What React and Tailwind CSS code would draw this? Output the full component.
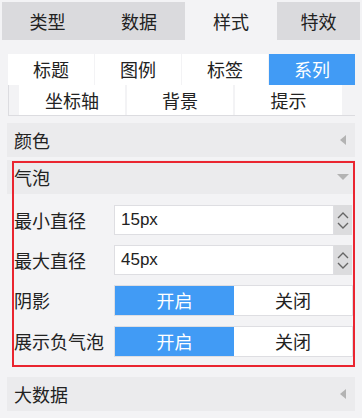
import React from "react";

const font = { fontFamily: '"Noto Sans CJK SC", "Liberation Sans", sans-serif' };

function LeftTri() {
  return (
    <svg width="8" height="12" viewBox="0 0 8 12" className="mr-[8px]">
      <path d="M7 1 L1 6 L7 11 Z" fill="#b3b3b3" />
    </svg>
  );
}
function DownTri() {
  return (
    <svg width="12" height="8" viewBox="0 0 12 8" className="mr-[6px]">
      <path d="M0 1 L12 1 L6 7 Z" fill="#b3b3b3" />
    </svg>
  );
}

function Header({ title, down }) {
  return (
    <div className="flex h-[34px] items-center justify-between bg-[#ebebed] pl-[7px] text-[18px] text-[#222]">
      <span>{title}</span>
      {down ? <DownTri /> : <LeftTri />}
    </div>
  );
}

function NumRow({ label, value }) {
  return (
    <div className="flex h-[30px] items-center">
      <div className="w-[107px] pl-[7px] text-[18px] text-[#222]">{label}</div>
      <div className="flex h-[30px] flex-1 items-center border border-[#dedee2] bg-white pl-[6px] text-[17px] text-[#222]" style={{ fontFamily: '"Liberation Sans", sans-serif' }}>
        {value}
      </div>
      <div className="flex h-[30px] w-[18px] flex-col items-center justify-center gap-[3px] bg-[#dcdcde]">
        <svg width="12" height="8" viewBox="0 0 12 8">
          <path d="M1 7 L6 2 L11 7" fill="none" stroke="#666" strokeWidth="1.4" />
        </svg>
        <svg width="12" height="8" viewBox="0 0 12 8">
          <path d="M1 1 L6 6 L11 1" fill="none" stroke="#666" strokeWidth="1.4" />
        </svg>
      </div>
      <div className="w-[3px]" />
    </div>
  );
}

function ToggleRow({ label }) {
  return (
    <div className="flex h-[31px] items-center">
      <div className="w-[107px] pl-[7px] text-[18px] text-[#222]">{label}</div>
      <div className="flex h-[31px] flex-1 border border-[#dedee2] text-[18px]">
        <div className="flex w-[119px] items-center justify-center bg-[#419bf5] text-white">开启</div>
        <div className="flex flex-1 items-center justify-center bg-white text-[#222]">关闭</div>
      </div>
      <div className="w-[2px]" />
    </div>
  );
}

export default function App() {
  return (
    <div className="relative h-[418px] w-[362px] overflow-hidden bg-[#f3f3f5] pl-[2px] pr-[2px] pt-[2px]" style={font}>
      <div className="flex h-[38px] text-[18px] text-[#222]">
        <div className="flex w-[91px] items-center justify-center bg-[#dadadd]">类型</div>
        <div className="flex w-[92px] items-center justify-center bg-[#dadadd]">数据</div>
        <div className="flex w-[92px] items-center justify-center bg-[#f3f3f5]">样式</div>
        <div className="flex flex-1 items-center justify-center bg-[#dadadd]">特效</div>
      </div>

      <div className="ml-[6px] mr-[5px] mt-[14px]">
        <div className="grid h-[31px] grid-cols-4 gap-px text-[18px] text-[#222]">
          <div className="flex items-center justify-center bg-white">标题</div>
          <div className="flex items-center justify-center bg-white">图例</div>
          <div className="flex items-center justify-center bg-white">标签</div>
          <div className="flex items-center justify-center bg-[#419bf5] text-white">系列</div>
        </div>
        <div className="flex h-[31px] gap-[2px] border-b border-l border-[#dcdce0] pl-[10px] text-[18px] text-[#222]">
          <div className="flex w-[106px] items-center justify-center bg-white">坐标轴</div>
          <div className="flex w-[106px] items-center justify-center bg-white">背景</div>
          <div className="flex w-[107px] items-center justify-center bg-white">提示</div>
        </div>
      </div>

      <div className="ml-[5px] mr-[5px] mt-[7px] flex flex-col">
        <Header title="颜色" />
        <div className="mt-[3px]">
          <Header title="气泡" down />
        </div>
        <div className="flex flex-col gap-[10px] pb-[20px] pt-[11px]">
          <NumRow label="最小直径" value="15px" />
          <NumRow label="最大直径" value="45px" />
          <ToggleRow label="阴影" />
          <ToggleRow label="展示负气泡" />
        </div>
        <Header title="大数据" />
      </div>

      <div className="pointer-events-none absolute left-[12px] top-[161px] h-[206px] w-[343px] border-2 border-[#ea2530]" />
    </div>
  );
}
